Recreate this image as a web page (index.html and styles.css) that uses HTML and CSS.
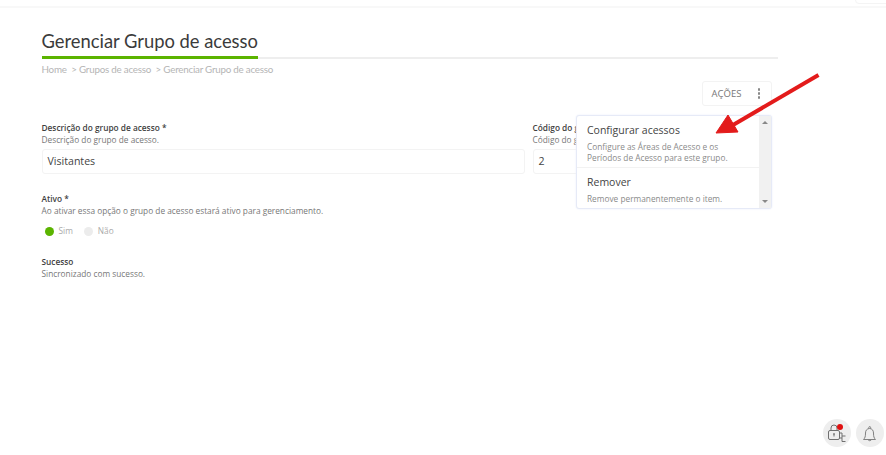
FILE: index.html
```html
<!DOCTYPE html>
<html lang="pt">
<head>
<meta charset="utf-8">
<title>Gerenciar Grupo de acesso</title>
<link rel="stylesheet" href="styles.css">
</head>
<body>
<div class="topbar"></div>
<div class="corner-tab"></div>
<main class="page">
  <h1 class="title"><span>Gerenciar Grupo de acesso</span></h1>
  <nav class="crumbs">Home &nbsp;&gt; Grupos de acesso &nbsp;&gt; Gerenciar Grupo de acesso</nav>
  <div class="actions-row">
    <div class="actions"><span>AÇÕES</span><i class="dots"><b></b><b></b><b></b></i></div>
  </div>
  <div class="fields">
    <div class="field">
      <label class="lbl">Descrição do grupo de acesso *</label>
      <p class="hint">Descrição do grupo de acesso.</p>
      <div class="input">Visitantes</div>
    </div>
    <div class="field">
      <label class="lbl">Código do grupo</label>
      <p class="hint">Código do grupo</p>
      <div class="input">2</div>
    </div>
  </div>
  <section class="block active">
    <label class="lbl">Ativo *</label>
    <p class="hint">Ao ativar essa opção o grupo de acesso estará ativo para gerenciamento.</p>
    <div class="radios">
      <span class="dot on"></span><span class="opt">Sim</span>
      <span class="dot"></span><span class="opt">Não</span>
    </div>
  </section>
  <section class="block">
    <label class="lbl">Sucesso</label>
    <p class="hint">Sincronizado com sucesso.</p>
  </section>
</main>

<div class="menu">
  <div class="menu-items">
    <div class="item first">
      <div class="item-t">Configurar acessos</div>
      <div class="item-d">Configure as Áreas de Acesso e os<br>Períodos de Acesso para este grupo.</div>
    </div>
    <div class="item">
      <div class="item-t">Remover</div>
      <div class="item-d">Remove permanentemente o item.</div>
    </div>
  </div>
  <div class="scroll"><i class="up"></i><i class="down"></i></div>
</div>

<svg class="arrow" width="110" height="70" viewBox="0 0 110 70">
  <path d="M104.500 2 L19 52" stroke="#e31b1b" stroke-width="4" fill="none"/>
  <path d="M2 60 L14 42 L24 59 Z" fill="#e31b1b" stroke="#e31b1b" stroke-linejoin="round"/>
</svg>

<div class="fabs">
  <div class="fab">
    <svg width="22" height="22" viewBox="0 0 22 22" fill="none" stroke="#707070" stroke-width="1">
      <rect x="2.500" y="8.500" width="11" height="9" rx="1.500"/>
      <path d="M5 8.500V6a3 3 0 0 1 6 0v2.500"/>
      <path d="M8 11.500v3M7 12h2"/>
      <path d="M13.500 11h2.500v3h3.500M16 14v5.500h3.500M13.500 16H16"/>
    </svg>
    <span class="badge"></span>
  </div>
  <div class="fab">
    <svg width="20" height="22" viewBox="0 0 20 22" fill="none" stroke="#808080" stroke-width="1">
      <path d="M3.500 17.500c1.500-1.500 2-3 2-6.500 0-2.500 1.500-4.500 4-4.500s4 2 4 4.500c0 3.500.5 5 2 6.500z"/>
      <path d="M8.800 6.500V5.500a.9.9 0 0 1 1.800 0v1M8 17.500a1.800 1.800 0 0 0 3.400 0"/>
    </svg>
  </div>
</div>
</body>
</html>
```
FILE: styles.css
```css
* { box-sizing: border-box; }
html, body { margin: 0; height: 455px; overflow: hidden; background: #fff; }
body { font-family: "Open Sans", sans-serif; color: #444; position: relative; }
.topbar { height: 8px; border-bottom: 2px solid #f8f8f8; }
.corner-tab { position: absolute; left: 855px; top: -4px; width: 40px; height: 8px; border: 1px solid #f4f4f4; border-radius: 4px; }
.page { padding: 21px 108px 0 41.500px; }
.title { margin: 0; font: 400 18.400px/24px Lato, sans-serif; color: #3b3b3b; letter-spacing: -.02px; border-bottom: 2px solid #eeeeee; height: 30px; }
.title span { display: inline-block; height: 30px; border-bottom: 3px solid #5bb400; }
.crumbs { font: 400 9.800px/14px Lato, sans-serif; color: #b5b5b5; margin-top: 3px; letter-spacing: -.23px; }
.actions-row { display: flex; justify-content: flex-end; margin-top: 5px; padding-right: 6px; }
.actions { width: 70px; height: 25px; border: 1px solid #f3f3f3; border-radius: 3px; display: flex; align-items: center; justify-content: space-between; padding: 0 11px 0 8.500px; font-size: 9.500px; color: #777; }
.dots { display: flex; flex-direction: column; gap: 1.500px; }
.dots b { width: 2.500px; height: 2.500px; border-radius: 50%; background: #888; }
.fields { display: grid; grid-template-columns: 483px 1fr; gap: 8px; margin-top: 16px; padding-right: 8px; }
.lbl { display: block; font-size: 8.300px; line-height: 12px; font-weight: 600; color: #3f3f3f; }
.hint { margin: 0; font-size: 8.300px; line-height: 12px; color: #777; white-space: nowrap; }
.input { height: 25px; margin-top: 3px; border: 1px solid #f3f3f3; border-radius: 3px; padding: 0 5px; font-size: 10.600px; line-height: 23px; color: #444; }
.block { margin-top: 19px; }
.radios { display: flex; align-items: center; margin: 8px 0 0 3px; }
.dot { width: 9px; height: 9px; border-radius: 50%; background: #ececec; margin-right: 5px; }
.dot.on { background: #5bb400; }
.opt { font-size: 8.300px; line-height: 12px; color: #aaa; margin-right: 11px; }
.block + .block { margin-top: 19px; }
.menu { position: absolute; left: 576px; top: 115px; width: 196px; height: 94px; background: #fff; border: 1px solid #e6eaf7; border-radius: 3px; box-shadow: 0 0 2px #e8ecfa; display: flex; }
.menu-items { flex: 1; min-width: 0; }
.item { padding: 3px 10px 4px; }
.item.first { height: 52px; border-bottom: 1px solid #f2f2f2; }
.item-t { font-size: 10.500px; line-height: 22px; color: #444; }
.item-d { font-size: 8.300px; line-height: 11px; color: #8a8a8a; }
.scroll { width: 12px; background: #f1f1f1; position: relative; }
.scroll i { position: absolute; left: 3px; width: 0; height: 0; border-left: 3px solid transparent; border-right: 3px solid transparent; }
.up { top: 5px; border-bottom: 3px solid #888; }
.down { bottom: 5px; border-top: 3px solid #888; }
.arrow { position: absolute; left: 714px; top: 73px; }
.fabs { position: absolute; left: 823px; top: 419px; display: flex; gap: 5px; }
.fab { width: 28px; height: 28px; border-radius: 50%; background: #eeeeee; display: flex; align-items: center; justify-content: center; position: relative; }
.badge { position: absolute; left: 14px; top: 5px; width: 6px; height: 6px; border-radius: 50%; background: #e01010; }
```
